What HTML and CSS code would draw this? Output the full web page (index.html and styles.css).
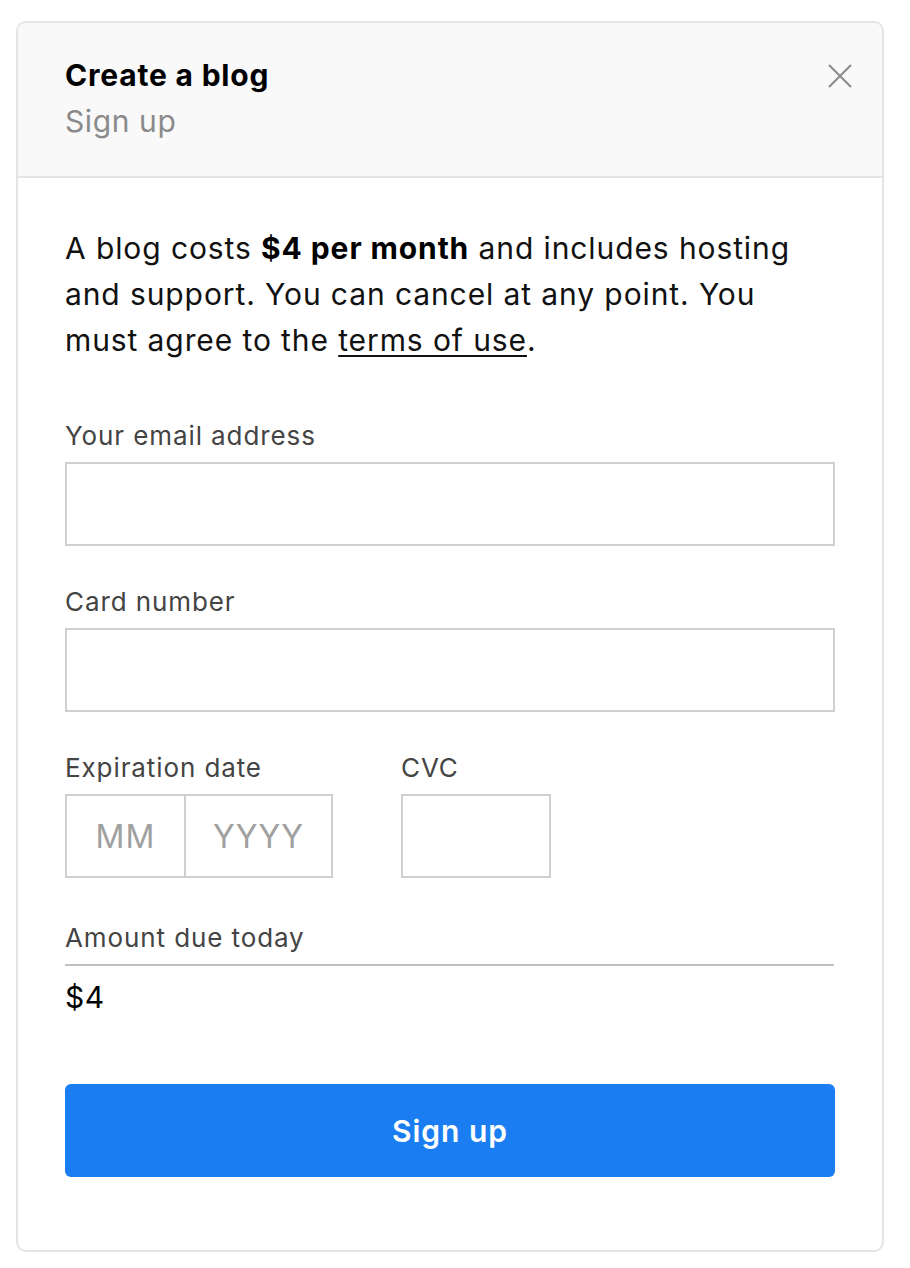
FILE: index.html
```html
<!DOCTYPE html>
<html lang="en">
<head>
<meta charset="utf-8">
<title>Create a blog</title>
<link rel="stylesheet" href="styles.css">
</head>
<body>
<div class="card">
  <div class="card-header">
    <div class="titles">
      <div class="title">Create a blog</div>
      <div class="subtitle">Sign up</div>
    </div>
    <button class="close" aria-label="Close">
      <svg width="24" height="24" viewBox="0 0 24 24"><path d="M1 1L23 23M23 1L1 23" stroke="#8a8a8a" stroke-width="2" fill="none"/></svg>
    </button>
  </div>
  <div class="card-body">
    <p class="intro">A blog costs <strong>$4 per month</strong> and includes hosting and support. You can cancel at any point. You must agree to the <a href="#">terms of use</a>.</p>
    <div class="field">
      <label class="label">Your email address</label>
      <div class="input"></div>
    </div>
    <div class="field">
      <label class="label">Card number</label>
      <div class="input"></div>
    </div>
    <div class="row">
      <div class="field">
        <label class="label">Expiration date</label>
        <div class="date">
          <div class="box mm">MM</div>
          <div class="box yyyy">YYYY</div>
        </div>
      </div>
      <div class="field">
        <label class="label">CVC</label>
        <div class="box cvc"></div>
      </div>
    </div>
    <div class="amount">
      <div class="label amount-label">Amount due today</div>
      <div class="amount-value">$4</div>
    </div>
    <button class="submit">Sign up</button>
  </div>
</div>
</body>
</html>
```
FILE: styles.css
```css
* { box-sizing: border-box; }
html, body { margin: 0; background: #fff; }
body {
  padding: 21px 26px 16px 16px;
  font-family: Inter, "Noto Sans", sans-serif;
  color: #111;
}
.card {
  width: 868px;
  border: 2px solid #e4e4e4;
  border-radius: 10px;
  overflow: hidden;
}
.card-header {
  background: #f9f9f9;
  border-bottom: 2px solid #e4e4e4;
  padding: 32px 30px 29px 47px;
  display: flex;
  justify-content: space-between;
  align-items: flex-start;
}
.title {
  font-size: 30px;
  font-weight: 700;
  letter-spacing: 0.8px;
  line-height: 40px;
  color: #000;
}
.subtitle {
  font-size: 30px;
  letter-spacing: 0.6px;
  line-height: 52px;
  color: #8a8a8a;
}
.close {
  border: 0;
  background: none;
  padding: 0;
  margin-top: 9px;
  width: 24px;
  height: 24px;
}
.close svg { display: block; }
.card-body {
  padding: 47px 48px 73px 47px;
}
.intro {
  margin: 0 0 56px;
  font-size: 30px;
  letter-spacing: 0.9px;
  line-height: 46px;
  color: #111;
}
.intro strong { font-weight: 700; color: #000; }
.intro a { color: #111; text-decoration: underline; text-underline-offset: 4px; text-decoration-thickness: 2px; }
.field { margin-bottom: 39px; }
.label {
  display: block;
  font-size: 26px;
  letter-spacing: 0.9px;
  line-height: 34px;
  color: #444;
  margin-bottom: 9px;
}
.input {
  height: 84px;
  border: 2px solid #cfcfcf;
  width: 770px;
}
.row {
  display: flex;
  gap: 68px;
}
.date { display: flex; }
.box {
  height: 84px;
  border: 2px solid #cfcfcf;
  display: flex;
  align-items: center;
  justify-content: center;
  font-size: 32px;
  letter-spacing: 1px;
  color: #a0a0a0;
}
.mm { width: 121px; }
.yyyy { width: 149px; margin-left: -2px; }
.cvc { width: 150px; }
.amount { margin-top: 4px; }
.amount-label {
  padding-bottom: 9px;
  border-bottom: 2px solid #c0c0c0;
  margin-bottom: 11px;
}
.amount-value {
  font-size: 30px;
  letter-spacing: 0.6px;
  line-height: 40px;
  color: #000;
}
.submit {
  display: block;
  margin-top: 67px;
  width: 770px;
  height: 93px;
  border: 0;
  border-radius: 6px;
  background: #1a7ef2;
  color: #fff;
  font-family: inherit;
  font-size: 30px;
  letter-spacing: 1px;
  font-weight: 600;
}
```
